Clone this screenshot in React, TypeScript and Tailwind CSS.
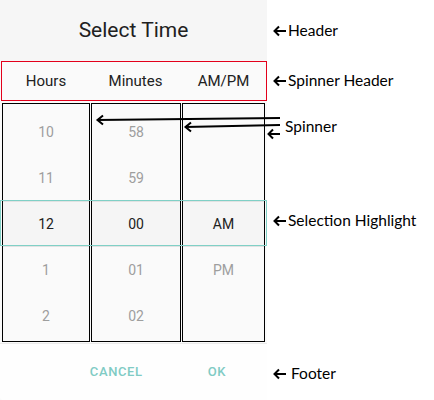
import React from "react";

const hours = ["10", "11", "12", "1", "2"];
const minutes = ["58", "59", "00", "01", "02"];
const ampm = ["", "", "AM", "PM", ""];

function Column({ items, width }: { items: string[]; width: string }) {
  return (
    <div className={`${width} h-[239px] border-[1.5px] border-black bg-[#fafafa] pt-[5px]`}>
      {items.map((v, i) => (
        <div
          key={i}
          className={
            i === 2
              ? "h-[46px] flex items-center justify-center border-y border-[#e2e2e2] bg-[#f5f5f5] text-[14px] text-[#212121]"
              : "h-[46px] flex items-center justify-center text-[14px] text-[#9e9e9e]"
          }
        >
          {v}
        </div>
      ))}
    </div>
  );
}

function Arrow() {
  return (
    <svg width="14" height="12" viewBox="0 0 14 12" className="shrink-0">
      <path d="M13 6H2M6 1.5L1.5 6 6 10.5" fill="none" stroke="black" strokeWidth="2" />
    </svg>
  );
}

export default function App() {
  return (
    <div className="relative flex w-[434px] h-[400px] bg-white overflow-hidden">
      <div className="w-[267px] h-[400px] flex flex-col bg-[#fafafa] font-['Roboto',sans-serif]">
        <div className="h-[61px] shrink-0 bg-[#f6f6f6] flex items-center justify-center text-[21px] text-[#212121]">
          Select Time
        </div>
        <div className="h-[40px] shrink-0 ml-[1px] border border-[#e3001b] flex items-center bg-[#fafafa] text-[15px] text-[#212121]">
          <div className="w-[88px] text-center">Hours</div>
          <div className="w-[91px] text-center">Minutes</div>
          <div className="w-[85px] text-center">AM/PM</div>
        </div>
        <div className="relative flex gap-[1px] pl-[2px] pt-[2px] h-[242px] shrink-0">
          <Column items={hours} width="w-[88px]" />
          <Column items={minutes} width="w-[90px]" />
          <Column items={ampm} width="w-[83px]" />
          <div className="absolute left-0 top-[99px] w-[267px] h-[46px] border-[1.5px] border-[#80d0c6]" />
        </div>
        <div className="flex-1 border-t border-[#ebebeb] bg-[#fefefe] rounded-bl-[3px] flex items-center justify-end pr-[41px] gap-[65px] pb-[1px] text-[13px] font-medium tracking-[0.6px] text-[#80cbc4]">
          <span>CANCEL</span>
          <span>OK</span>
        </div>
      </div>

      <div className="flex-1 flex flex-col pl-[6px] font-['Lato',sans-serif] text-[15.5px] text-black">
        <div className="h-[61px] flex items-center gap-[1px]">
          <Arrow />
          <span>Header</span>
        </div>
        <div className="h-[40px] flex items-center gap-[1px]">
          <Arrow />
          <span>Spinner Header</span>
        </div>
        <div className="h-[52px] flex items-center pl-[12px]">
          <span>Spinner</span>
        </div>
        <div className="h-[136px] flex items-center gap-[1px]">
          <Arrow />
          <span>Selection Highlight</span>
        </div>
        <div className="mt-auto h-[52px] flex items-center gap-[4px]">
          <Arrow />
          <span>Footer</span>
        </div>
      </div>

      <svg className="absolute inset-0 pointer-events-none" width="434" height="400">
        <g fill="none" stroke="black" strokeWidth="2">
          <path d="M280 118L97 120M103 115.5L97.5 120 103 124.5" />
          <path d="M280 125L185 127M191 122.5L185.5 127 191 131.5" />
          <path d="M280 134L268 134M273 129.5L268.5 134 273 138.5" />
        </g>
      </svg>
    </div>
  );
}
